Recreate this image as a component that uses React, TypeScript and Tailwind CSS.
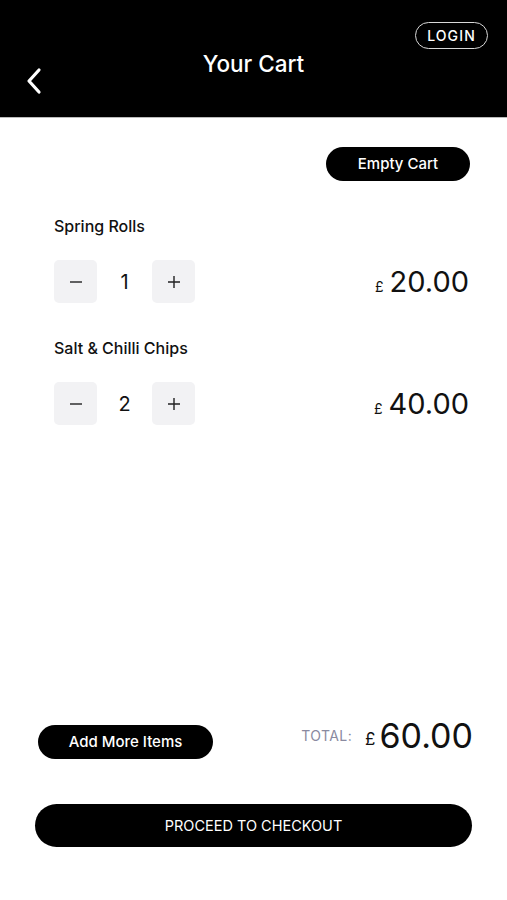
import React from "react";

interface CartItem {
  name: string;
  qty: number;
  price: string;
}

const items: CartItem[] = [
  { name: "Spring Rolls", qty: 1, price: "20.00" },
  { name: "Salt & Chilli Chips", qty: 2, price: "40.00" },
];

function Stepper({ qty }: { qty: number }) {
  return (
    <div className="flex items-center">
      <button className="flex h-[43px] w-[43px] items-center justify-center rounded-[5px] bg-[#f2f2f4]">
        <svg width="14" height="14" viewBox="0 0 14 14">
          <path d="M1 7h12" stroke="#222" strokeWidth="1.4" />
        </svg>
      </button>
      <span className="w-[55px] text-center text-[20px] text-[#111]">{qty}</span>
      <button className="flex h-[43px] w-[43px] items-center justify-center rounded-[5px] bg-[#f2f2f4]">
        <svg width="14" height="14" viewBox="0 0 14 14">
          <path d="M1 7h12M7 1v12" stroke="#222" strokeWidth="1.4" />
        </svg>
      </button>
    </div>
  );
}

export default function App() {
  return (
    <div
      className="flex min-h-[900px] flex-col bg-white"
      style={{ fontFamily: "Inter, 'Open Sans', sans-serif" }}
    >
      {/* header */}
      <div className="relative h-[118px] border-b border-[#bbb] bg-black">
        <svg className="absolute left-[25px] top-[67px]" width="18" height="28" viewBox="0 0 18 28">
          <path d="M14 3L4 14l10 11" fill="none" stroke="white" strokeWidth="3.2" strokeLinecap="round" strokeLinejoin="round" />
        </svg>
        <div className="absolute left-0 right-0 top-[47px] text-center text-[22.5px] font-medium text-white">Your Cart</div>
        <div className="absolute left-[415px] top-[22px] flex h-[27px] w-[73px] items-center justify-center rounded-full border-[1.5px] border-[#d8d8d8] text-[14px] font-medium tracking-[0.08em] text-white">
          LOGIN
        </div>
      </div>

      <div className="flex flex-1 flex-col px-[54px] pb-[53px]">
        <div className="mt-[29px] flex justify-end">
          <button className="-mr-[17px] flex h-[34px] w-[144px] items-center justify-center rounded-full bg-black text-[15px] font-medium text-white">
            Empty Cart
          </button>
        </div>

        <div className="mt-[35px] flex flex-col gap-[35px]">
          {items.map((it) => (
            <div key={it.name}>
              <div className="text-[16px] font-medium leading-[20px] text-[#111]">{it.name}</div>
              <div className="mt-[24px] flex items-center justify-between">
                <Stepper qty={it.qty} />
                <div className="-mr-[16px] flex items-baseline text-[#111]">
                  <span className="mr-[6px] text-[14px]">£</span>
                  <span className="text-[29px] leading-none">{it.price}</span>
                </div>
              </div>
            </div>
          ))}
        </div>

        <div className="flex-1" />

        <div className="-mx-[16px] flex items-center justify-between">
          <button className="flex h-[34px] w-[175px] items-center justify-center rounded-full bg-black text-[15px] font-medium text-white">
            Add More Items
          </button>
          <div className="-mr-[4px] -mt-[10px] flex items-baseline">
            <span className="relative -top-[7px] mr-[13px] text-[14px] tracking-[0.03em] text-[#8a8aa0]">TOTAL:</span>
            <span className="relative -top-[3px] mr-[4px] text-[17px] text-[#111]">£</span>
            <span className="text-[34px] leading-none text-[#111]">60.00</span>
          </div>
        </div>

        <button className="-mx-[19px] mt-[45px] flex h-[43px] items-center justify-center rounded-full bg-black text-[14.5px] text-white">
          PROCEED TO CHECKOUT
        </button>
      </div>
    </div>
  );
}
